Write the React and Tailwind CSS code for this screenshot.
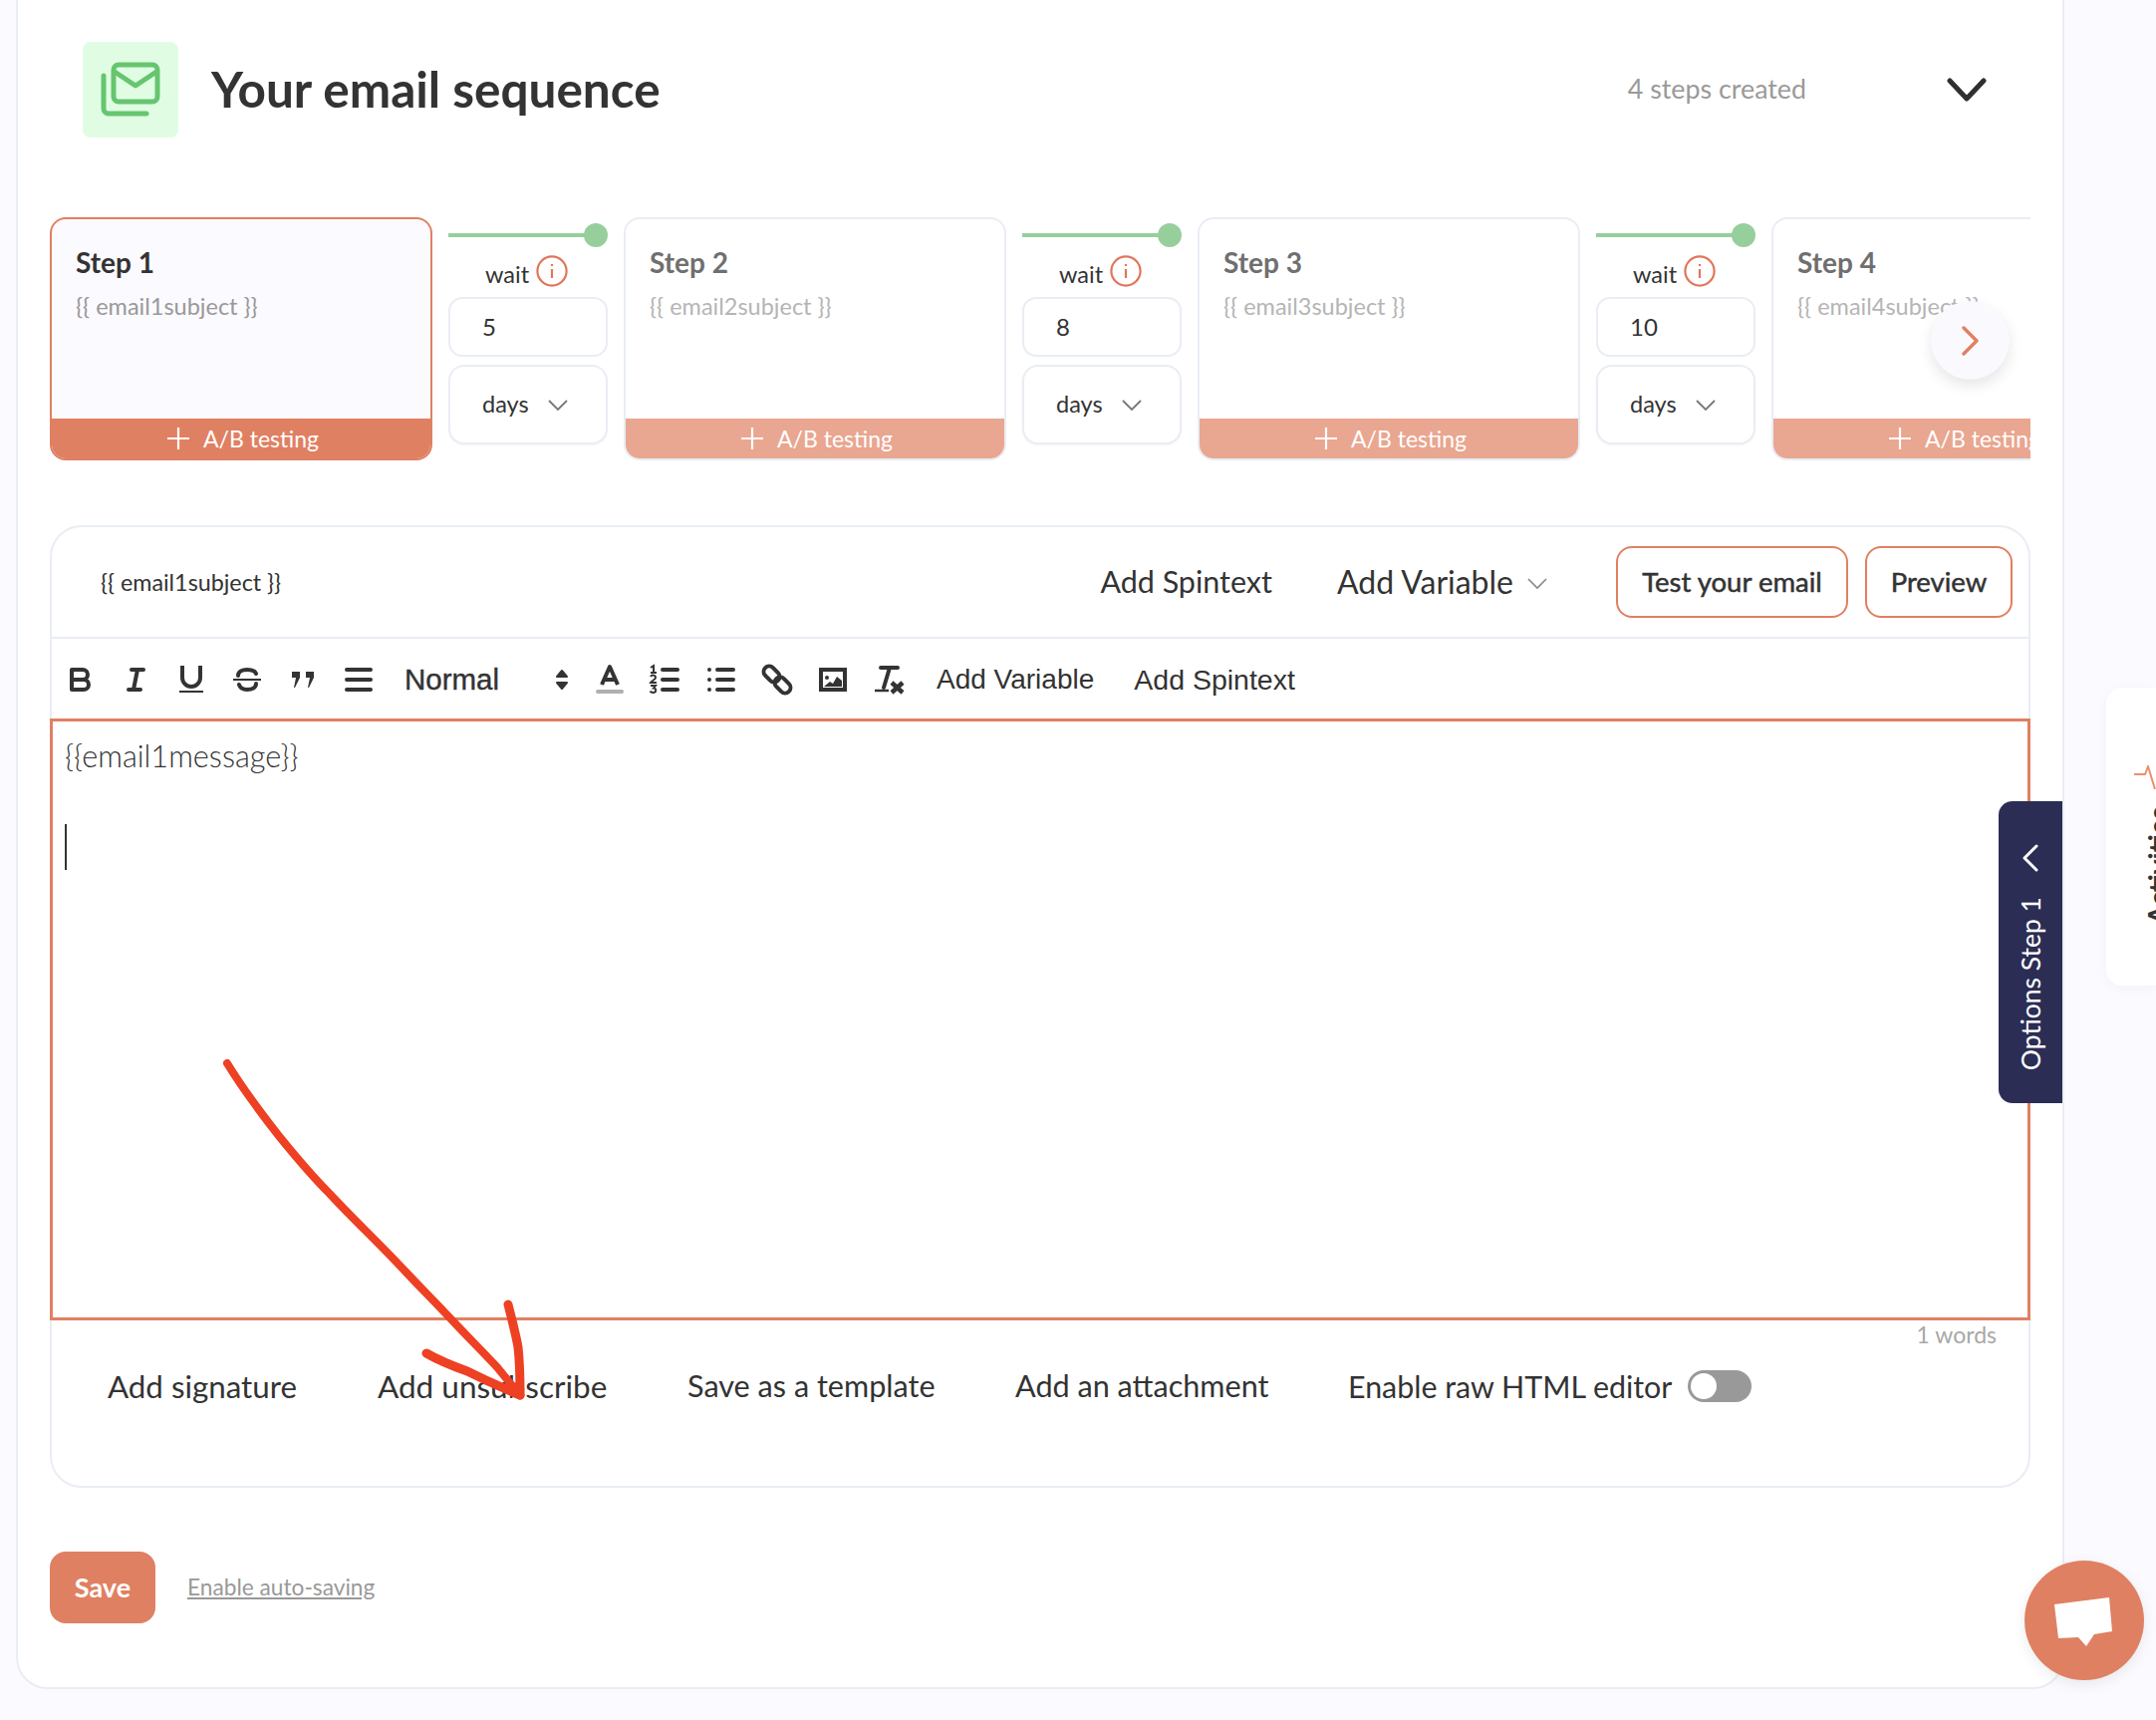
import React from "react";

const Font = "font-['Lato','Liberation_Sans',sans-serif]";

function StepCard({ n, active, subject }) {
  return (
    <div
      className={`flex h-[244px] w-[384px] shrink-0 flex-col overflow-hidden rounded-[16px] border-2 ${
        active ? "border-[#e08062] bg-[#fbfaff]" : "border-[#e9edf4] bg-white"
      }`}
    >
      <div className="flex-1 px-[24px] pt-[25px]">
        <div className={`text-[28px] leading-[36px] font-bold ${active ? "text-[#333333]" : "text-[#6f6f70]"}`}>Step {n}</div>
        <div className={`mt-[10px] whitespace-nowrap text-[23.5px] leading-[32px] ${active ? "text-[#999999]" : "text-[#b5b5b5]"}`}>
          {subject}
        </div>
      </div>
      <div className={`flex h-[40px] shrink-0 items-center justify-center gap-[14px] pl-[4px] text-[23px] text-white ${active ? "bg-[#e08062]" : "bg-[#e9a690]"}`}>
        <svg width="22" height="22" viewBox="0 0 22 22" fill="none" stroke="white" strokeWidth="2.2"><path d="M11 0v22M0 11h22" /></svg>
        <span className="whitespace-nowrap">A/B testing</span>
      </div>
    </div>
  );
}

function Wait({ value }) {
  return (
    <div className="flex w-[160px] shrink-0 flex-col">
      <div className="flex h-[38px] items-start">
        <div className="mt-[16px] h-[4px] w-[140px] bg-[#97cf9c]" />
        <div className="ml-[-4px] mt-[6px] h-[24px] w-[24px] rounded-full bg-[#97cf9c]" />
      </div>
      <div className="flex h-[42px] items-start pl-[37px]">
        <span className="mt-[3px] text-[23.5px] leading-[32px] text-[#333333]">wait</span>
        <svg className="ml-[7px]" width="32" height="32" viewBox="0 0 32 32" fill="none" stroke="#e0765a" strokeWidth="2.2">
          <circle cx="16" cy="16" r="14.6" />
          <path d="M16 14v9M16 9v2" />
        </svg>
      </div>
      <div className="flex h-[60px] items-center rounded-[14px] border-2 border-[#e9edf4] bg-white pl-[32px] text-[24px] text-[#333333]">{value}</div>
      <div className="mt-[8px] flex h-[80px] items-center rounded-[16px] border-2 border-[#e9edf4] bg-white pl-[32px] text-[23.5px] text-[#333333] shadow-[0_1px_2px_rgba(0,0,0,0.05)]">
        days
        <svg className="ml-[19px] mt-[2px]" width="20" height="12" viewBox="0 0 20 12" fill="none" stroke="#777" strokeWidth="1.8"><path d="M1 1l9 9 9-9" /></svg>
      </div>
    </div>
  );
}

const s4 = { fill: "none", stroke: "#333", strokeWidth: 4, strokeLinecap: "round", strokeLinejoin: "round" };

// Toolbar icons are drawn around the centre of their cell (0,0).
function Ic({ w = 56, children }) {
  return (
    <svg className="shrink-0" width={w} height="40" viewBox={`${-w / 2} -20 ${w} 40`}>
      {children}
    </svg>
  );
}

function Toolbar() {
  return (
    <div className="flex h-[80px] items-center pt-[2px] text-[#333333] font-['Liberation_Sans','Lato',sans-serif]">
      <Ic><path {...s4} d="M-8 -10H3A5 5 0 0 1 3 0H-8ZM-8 0H4A5 5 0 0 1 4 10H-8Z" /></Ic>
      <Ic>
        <path {...s4} d="M-4 -10H8M-7 10H5M2 -10L-2 10" />
      </Ic>
      <Ic>
        <path {...s4} strokeLinecap="butt" d="M-9 -14V-2A9 9 0 0 0 9 -2V-14" />
        <path stroke="#333" strokeWidth="2" d="M-12 12H12" />
      </Ic>
      <Ic>
        <path {...s4} d="M9 -6C8 -9 4 -10 0 -10C-5 -10 -9 -8 -9 -4M-8 5C-7 9 -4 10 0 10C5 10 9 8 9 4" />
        <path stroke="#333" strokeWidth="2" d="M-14 0H14" />
      </Ic>
      <Ic>
        <path fill="#333" d="M-11 -8H-3V-2L-8 8H-9L-7 -2H-11ZM3 -8H11V-2L6 8H5L7 -2H3Z" />
      </Ic>
      <Ic>
        <path {...s4} d="M-12 -10H12M-12 0H12M-12 10H12" />
      </Ic>
      <span className="ml-[18px] w-[138px] text-[29.5px] leading-none [-webkit-text-stroke:0.4px_#333]">Normal</span>
      <Ic w={40}>
        <path fill="#333" stroke="#333" strokeWidth="2" strokeLinejoin="round" d="M0 -9L5 -3H-5ZM0 9L5 3H-5Z" />
      </Ic>
      <Ic>
        <path {...s4} strokeLinecap="butt" d="M-8 5L0 -13L8 5M-5 0H5" />
        <rect x="-14" y="10" width="28" height="4" rx="2" fill="#b0b0b0" />
      </Ic>
      <Ic>
        <path {...s4} d="M-3 -10H12M-3 0H12M-3 10H12" />
        <path fill="none" stroke="#333" strokeWidth="2" d="M-15 -12L-12 -14V-7M-15 -7H-9M-15 -3C-14 -5 -10 -5 -10 -2C-10 0 -14 1 -15 3H-9M-15 6H-10L-12 8.5C-9 8.5 -9 13 -12.5 13C-14 13 -15 12.5 -15.5 11.5" />
      </Ic>
      <Ic>
        <path {...s4} d="M-4 -10H12M-4 0H12M-4 10H12" />
        <path {...s4} d="M-12 -10H-12M-12 0H-12M-12 10H-12" />
      </Ic>
      <Ic>
        <rect {...s4} x="-9" y="-5.5" width="18" height="11" rx="5.5" transform="translate(-5.5 -5.5) rotate(45)" />
        <rect {...s4} x="-9" y="-5.5" width="18" height="11" rx="5.5" transform="translate(5.5 5.5) rotate(45)" />
      </Ic>
      <Ic>
        <rect {...s4} strokeLinejoin="miter" x="-12" y="-10" width="24" height="20" />
        <path fill="#333" d="M-9 7L-3 2L0 4L4 -3L9 1V7Z" />
        <circle cx="-6" cy="-2" r="2" fill="#333" />
      </Ic>
      <Ic w={58}>
        <path {...s4} d="M-9 -12H8M0 -12L-6 8" />
        <path stroke="#333" strokeWidth="2.5" d="M-15 11H-1" />
        <path {...s4} strokeWidth="4.5" strokeLinecap="butt" d="M2 3L13 13M13 3L2 13" />
      </Ic>
      <span className="ml-[18px] whitespace-nowrap text-[28px] leading-none">Add Variable</span>
      <span className="ml-[40px] whitespace-nowrap text-[28.5px] leading-none">Add Spintext</span>
    </div>
  );
}

function Editor() {
  return (
    <div className="mt-[65px] flex h-[966px] w-[1988px] flex-col rounded-[32px] border-2 border-[#e9edf4] bg-white">
      <div className="flex h-[112px] shrink-0 items-center border-b-2 border-[#e9edf4] pl-[49px] pr-[16px]">
        <span className="text-[23.3px] text-[#333333]">{"{{ email1subject }}"}</span>
        <span className="ml-auto text-[30.5px] text-[#333333]">Add Spintext</span>
        <span className="ml-[65px] text-[32px] text-[#333333]">Add Variable</span>
        <svg className="ml-[14px] mr-[69px] mt-[4px]" width="20" height="12" viewBox="0 0 20 12" fill="none" stroke="#888" strokeWidth="1.6"><path d="M1 1l9 9 9-9" /></svg>
        <button className="h-[72px] w-[233px] rounded-[16px] border-2 border-[#e08062] text-[27.5px] text-[#333333] [-webkit-text-stroke:0.5px_#333]">Test your email</button>
        <button className="ml-[17px] h-[72px] w-[148px] rounded-[16px] border-2 border-[#e08062] text-[27.5px] text-[#333333] [-webkit-text-stroke:0.5px_#333]">Preview</button>
      </div>
      <Toolbar />
      <div className="relative -mx-[2px] h-[604px] shrink-0 border-[3px] border-[#e08062] pl-[12px] pt-[13px] text-[#333333]">
        <div className="text-[30.7px] leading-[44px] font-light">{"{{email1message}}"}</div>
        <div className="mt-[46px] h-[46px] w-[2px] bg-[#333333]" />
      </div>
      <div className="flex justify-end pr-[32px] text-[23px] leading-[28px] text-[#a8a8a8]">1 words</div>
      <div className="mt-[18px] flex items-center whitespace-nowrap pl-[56px] text-[30.6px] leading-[40px] text-[#333333]">
        <span className="w-[271px] text-[31.3px]">Add signature</span>
        <span className="w-[311px] text-[31.5px]">Add unsubscribe</span>
        <span className="w-[329px]">Save as a template</span>
        <span className="w-[334px]">Add an attachment</span>
        <span className="w-[341px] text-[30.4px]">Enable raw HTML editor</span>
        <div className="flex h-[32px] w-[64px] items-center rounded-full bg-[#999999] pl-[3px]">
          <div className="h-[26px] w-[26px] rounded-full bg-white" />
        </div>
      </div>
    </div>
  );
}

export default function App() {
  return (
    <div className={`relative h-[1726px] w-[2164px] overflow-hidden bg-[#fafaff] ${Font}`}>
      <div className="relative ml-[16px] mt-[-40px] h-[1735px] w-[2056px] rounded-[32px] border-2 border-[#e9edf4] bg-white pl-[32px]">
        <div className="mt-[80px] flex h-[96px] items-center pl-[33px] pr-[76px]">
          <div className="flex h-[96px] w-[96px] items-center justify-center rounded-[8px] bg-[#e0fde4]">
            <svg width="60" height="56" viewBox="0 0 60 56" fill="none" stroke="#66c56f" strokeWidth="5" strokeLinecap="round" strokeLinejoin="round">
              <rect x="13" y="3" width="44" height="37" rx="5" />
              <path d="M14 10l21 14 21-14" />
              <path d="M3 14v33a5 5 0 0 0 5 5h38" />
            </svg>
          </div>
          <h1 className="mb-[2px] ml-[33px] text-[49.5px] font-bold text-[#333333]">Your email sequence</h1>
          <span className="mb-[2px] ml-auto text-[26.8px] text-[#9a9a9a]">4 steps created</span>
          <svg className="ml-[141px]" width="40" height="24" viewBox="0 0 40 24" fill="none" stroke="#2f2f2f" strokeWidth="5" strokeLinecap="round" strokeLinejoin="round"><path d="M3 3l17 18L37 3" /></svg>
        </div>
        <div className="mt-[80px] flex h-[244px] w-[1988px] items-start gap-[16px] overflow-hidden">
          <StepCard n={1} active subject="{{ email1subject }}" />
          <Wait value="5" />
          <StepCard n={2} subject="{{ email2subject }}" />
          <Wait value="8" />
          <StepCard n={3} subject="{{ email3subject }}" />
          <Wait value="10" />
          <StepCard n={4} subject="{{ email4subject }}" />
        </div>
        <Editor />
        <div className="mt-[64px] flex items-center">
          <button className="h-[72px] w-[106px] rounded-[16px] bg-[#e08062] text-[27px] font-bold text-white">Save</button>
          <a className="ml-[32px] text-[22.7px] text-[#999999] underline">Enable auto-saving</a>
        </div>
      </div>

      {/* next arrow */}
      <div className="absolute left-[1938px] top-[302px] flex h-[79px] w-[79px] items-center justify-center rounded-full bg-[#f9f9fe] shadow-[0_6px_14px_rgba(0,0,0,0.1)]">
        <svg width="20" height="30" viewBox="0 0 20 30" fill="none" stroke="#e08062" strokeWidth="3.4" strokeLinecap="round" strokeLinejoin="round"><path d="M3 2l13 13L3 28" /></svg>
      </div>

      {/* options tab */}
      <div className="absolute left-[2006px] top-[804px] flex h-[303px] w-[64px] flex-col items-center rounded-l-[14px] bg-[#2b2d55] pt-[43px]">
        <svg width="16" height="28" viewBox="0 0 16 28" fill="none" stroke="white" strokeWidth="3" strokeLinecap="round" strokeLinejoin="round"><path d="M14 2L2 14l12 12" /></svg>
        <div className="mt-[25px] rotate-180 whitespace-nowrap text-[26.5px] leading-[32px] text-white [writing-mode:vertical-rl]">Options Step 1</div>
      </div>

      {/* activities panel */}
      <div className="absolute left-[2114px] top-[690px] h-[299px] w-[50px] overflow-hidden rounded-l-[16px] bg-white shadow-[0_2px_12px_rgba(60,60,120,0.04)]">
        <svg className="absolute left-[27px] top-[78px]" width="24" height="24" viewBox="0 0 24 24" fill="none" stroke="#e89070" strokeWidth="2"><path d="M1 9H12L15 1L22 24" /></svg>
        <div className="absolute left-[36px] top-[120px] rotate-180 whitespace-nowrap text-[28px] leading-[32px] font-bold text-[#333333] [writing-mode:vertical-rl]">Activities</div>
      </div>

      {/* chat */}
      <div className="absolute left-[2032px] top-[1566px] flex h-[120px] w-[120px] items-center justify-center rounded-full bg-[#e08062] shadow-[0_4px_14px_rgba(0,0,0,0.08)]">
        <svg width="60" height="52" viewBox="0 0 60 52"><path fill="white" d="M0 10L55 3L58 37L40 40L32 52L24 43L4 44Z" /></svg>
      </div>

      {/* hand-drawn arrow */}
      <svg className="pointer-events-none absolute left-0 top-0" width="2164" height="1726" fill="none" stroke="#ee4023" strokeLinecap="round" strokeLinejoin="round">
        <path strokeWidth="8" d="M228 1067C245 1095 262 1117 280 1140C297 1161 313 1180 331 1198C343 1211 355 1223 367 1235C381 1249 394 1262 407 1276C422 1292 438 1308 453 1324C468 1340 484 1356 499 1372C508 1383 515 1392 522 1400" />
        <path strokeWidth="9" d="M428 1358C442 1366 455 1371 469 1376C487 1385 505 1393 522 1400" />
        <path strokeWidth="9" d="M510 1309C514 1325 518 1340 520 1352C522 1370 522 1385 522 1400" />
      </svg>
    </div>
  );
}
